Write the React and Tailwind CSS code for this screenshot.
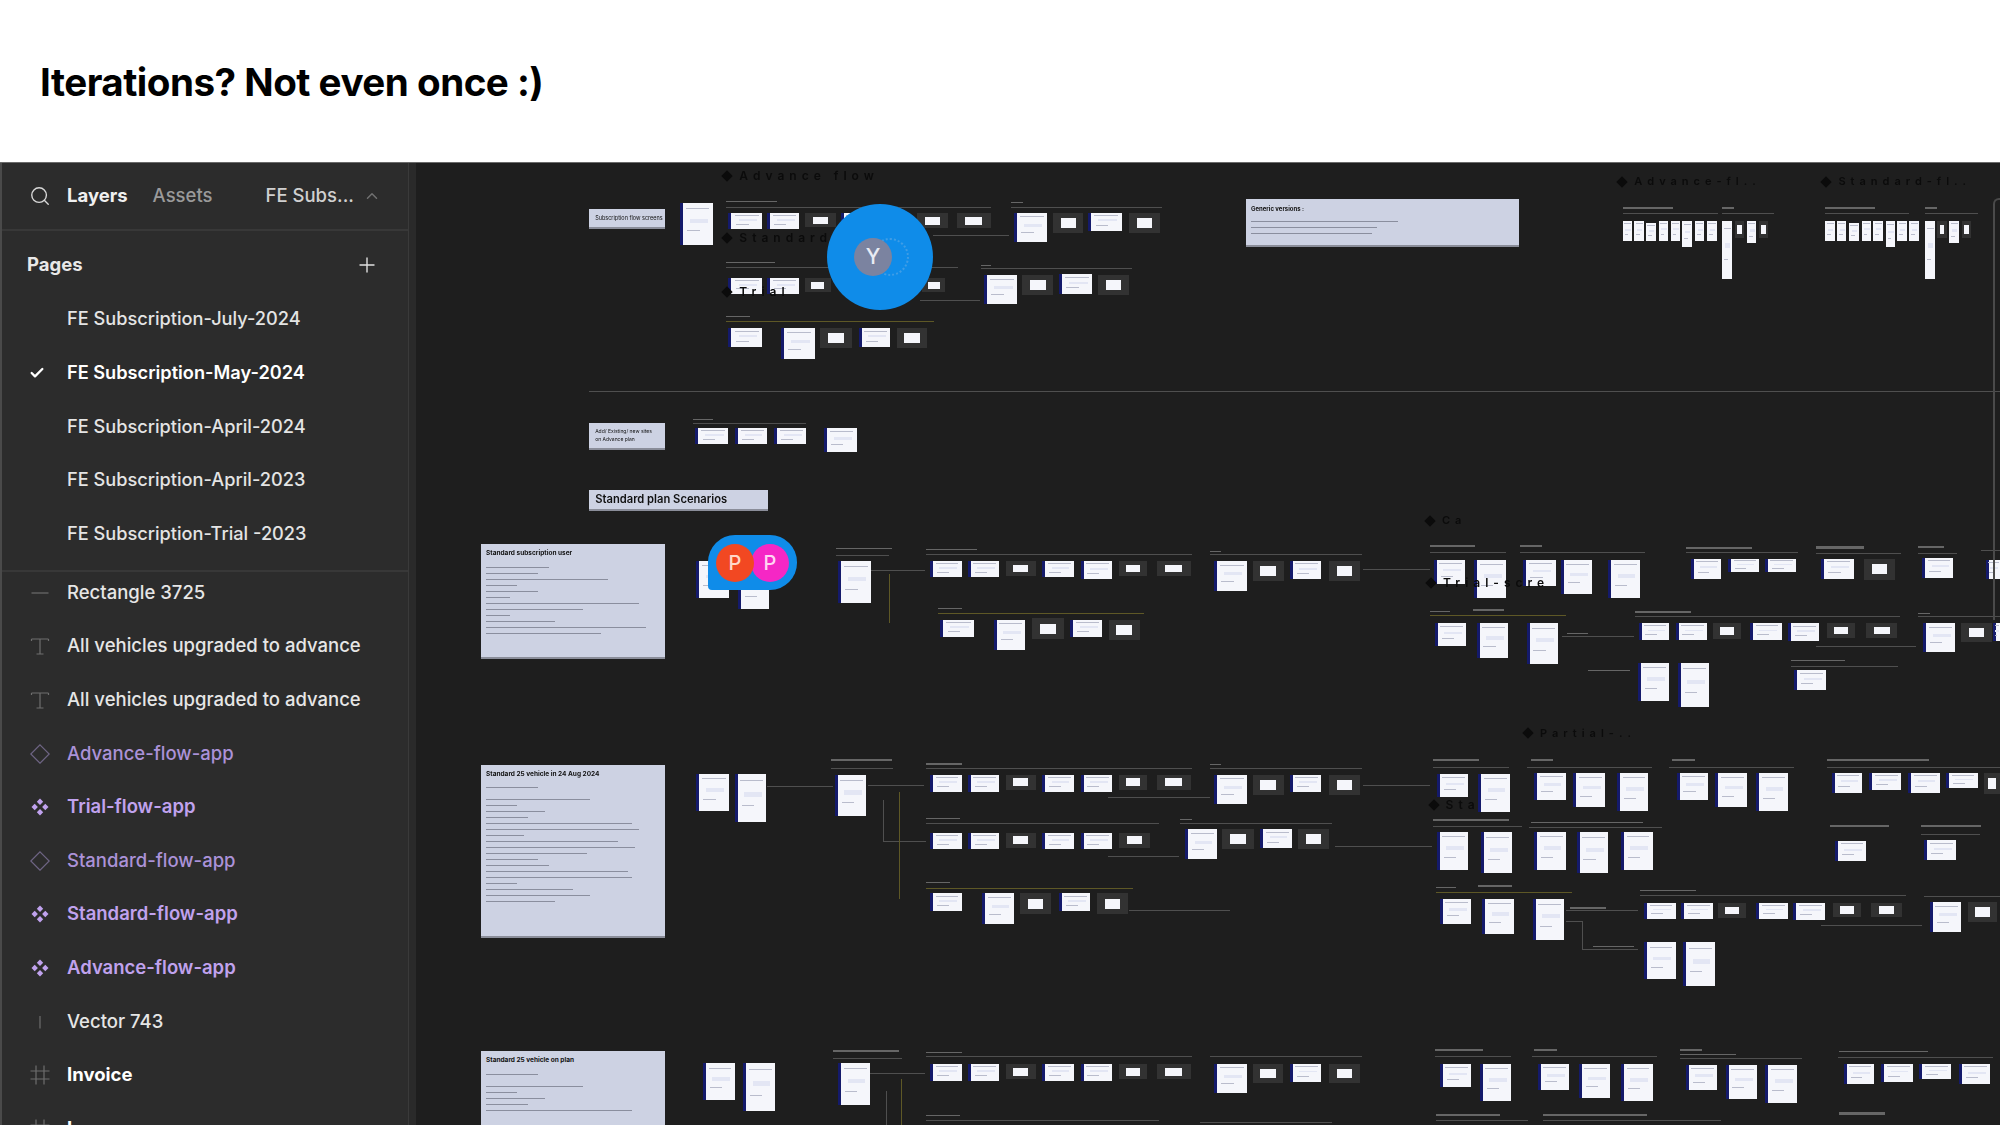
import React from 'react';
import { Search, ChevronUp, Plus, Check } from 'lucide-react';

const font = { fontFamily: 'Inter, "Noto Sans", sans-serif' };

// canvas items are measured in crops of the reference, each crop has its own scale
const region = (ox, oy, sx, sy) => ([x, y, w, h]) => ({
  left: ox + x / sx - 416,
  top: oy + y / sy - 163,
  width: w / sx,
  height: Math.max(h / sy, 1),
});

const A = region(430, 160, 1.96, 3);
const B = region(1200, 160, 1.96, 3);
const C = region(430, 520, 1.96, 2.592);
const D = region(1200, 520, 1.96, 2.592);
const E = region(1600, 170, 3, 3);

const groups = [
  {
    at: A,
    t: [[490, 128, 64, 126], [585, 160, 66, 48], [660, 160, 64, 48], [805, 160, 60, 48], [1145, 158, 64, 88], [1290, 158, 66, 54], [585, 355, 66, 46], [660, 355, 64, 46], [1085, 345, 66, 88], [1232, 343, 66, 58], [585, 505, 66, 56], [688, 505, 66, 92], [840, 505, 62, 56], [520, 805, 65, 48], [598, 805, 62, 48], [675, 805, 62, 48], [772, 805, 64, 72]],
    d: [[735, 160, 60, 42], [955, 160, 60, 45], [1033, 160, 66, 45], [1222, 158, 58, 60], [1370, 158, 60, 60], [735, 355, 50, 42], [965, 355, 45, 42], [1160, 345, 62, 60], [1310, 345, 60, 60], [765, 505, 62, 58], [915, 505, 60, 58]],
    l: [[580, 140, 520, 2], [1138, 140, 296, 2], [985, 226, 150, 2], [580, 322, 455, 2], [1080, 325, 296, 2], [960, 421, 118, 2], [312, 692, 4000, 2], [515, 788, 222, 2]],
    o: [[580, 484, 408, 2]],
    c: [[580, 122, 100, 4], [1138, 126, 24, 4], [580, 305, 96, 4], [1080, 315, 20, 4], [580, 468, 48, 4], [515, 776, 40, 4]],
  },
  {
    at: C,
    t: [[522, 105, 64, 97], [603, 130, 62, 100], [800, 105, 64, 110], [980, 107, 62, 42], [1054, 107, 62, 42], [1200, 107, 62, 42], [1275, 107, 62, 46], [1000, 258, 66, 46], [1105, 258, 62, 78], [1255, 258, 62, 46], [522, 658, 64, 97], [597, 658, 62, 124], [793, 660, 62, 108], [980, 660, 62, 44], [1054, 660, 62, 44], [1200, 660, 62, 44], [1275, 660, 62, 44], [980, 810, 62, 44], [1054, 810, 62, 44], [1200, 810, 62, 44], [1275, 810, 62, 44], [980, 968, 62, 46], [1082, 968, 62, 80], [1232, 968, 62, 46], [1480, 802, 62, 78], [535, 1408, 62, 95], [614, 1408, 62, 124], [800, 1408, 62, 108], [980, 1410, 62, 44], [1054, 1410, 62, 44], [1200, 1410, 62, 44], [1275, 1410, 62, 44]],
    d: [[1128, 107, 60, 38], [1350, 107, 56, 38], [1425, 107, 66, 38], [1180, 255, 62, 54], [1330, 258, 62, 54], [1128, 660, 60, 40], [1350, 660, 56, 40], [1425, 660, 66, 40], [1128, 810, 60, 40], [1350, 810, 62, 40], [1157, 968, 60, 54], [1308, 968, 60, 54], [1128, 1410, 60, 40], [1350, 1410, 56, 40], [1425, 1410, 66, 40]],
    l: [[795, 90, 105, 1], [865, 130, 105, 1], [972, 88, 522, 1], [660, 690, 130, 1], [785, 643, 122, 1], [858, 686, 110, 1], [887, 725, 1, 108], [887, 832, 85, 1], [972, 643, 522, 1], [972, 785, 456, 1], [1328, 718, 200, 1], [1328, 870, 140, 1], [1370, 1012, 198, 1], [790, 1394, 135, 1], [862, 1434, 108, 1], [893, 1480, 1, 88], [972, 1390, 522, 1], [972, 1555, 456, 1], [1470, 785, 98, 1]],
    o: [[899, 140, 2, 126], [995, 240, 405, 1], [920, 705, 2, 278], [972, 953, 406, 1], [923, 1448, 2, 120]],
    c: [[795, 72, 110, 4], [972, 75, 100, 4], [995, 228, 48, 3], [785, 620, 120, 4], [972, 630, 70, 4], [972, 772, 66, 3], [972, 939, 48, 3], [1470, 775, 24, 3], [790, 1374, 130, 4], [972, 1378, 70, 4], [972, 1542, 66, 3]],
  },
  {
    at: D,
    t: [[28, 107, 64, 76], [176, 107, 62, 46], [458, 103, 62, 62], [538, 103, 62, 98], [633, 103, 64, 68], [707, 103, 62, 88], [800, 103, 62, 98], [962, 100, 60, 52], [1035, 100, 60, 36], [1107, 100, 62, 36], [1217, 100, 64, 52], [1416, 98, 60, 52], [1540, 103, 28, 50], [460, 267, 62, 60], [542, 267, 62, 90], [640, 267, 62, 105], [860, 268, 60, 42], [932, 268, 62, 42], [1078, 268, 62, 42], [1152, 268, 62, 46], [1418, 267, 62, 76], [1555, 267, 13, 46], [858, 370, 62, 98], [936, 370, 62, 116], [1165, 390, 62, 50], [28, 660, 64, 76], [176, 660, 62, 46], [464, 658, 62, 60], [545, 658, 62, 98], [655, 655, 62, 70], [732, 655, 62, 90], [817, 655, 62, 100], [934, 655, 62, 70], [1010, 655, 62, 90], [1090, 655, 62, 100], [1238, 655, 60, 52], [1312, 655, 62, 46], [1388, 655, 62, 52], [1462, 655, 62, 40], [118, 802, 62, 48], [464, 808, 62, 98], [550, 808, 62, 108], [655, 808, 62, 98], [738, 808, 62, 108], [825, 808, 62, 98], [1245, 832, 60, 52], [1420, 830, 62, 52], [470, 982, 62, 64], [553, 982, 62, 92], [652, 982, 62, 106], [870, 992, 62, 42], [943, 992, 62, 42], [1090, 992, 62, 42], [1163, 992, 62, 46], [1430, 990, 62, 78], [870, 1095, 62, 96], [947, 1095, 62, 114], [28, 1410, 64, 74], [176, 1410, 62, 46], [470, 1410, 62, 60], [548, 1410, 62, 96], [662, 1410, 62, 68], [742, 1410, 62, 88], [825, 1410, 62, 96], [952, 1412, 62, 66], [1030, 1412, 62, 88], [1108, 1412, 62, 100], [1262, 1410, 60, 52], [1335, 1410, 62, 46], [1410, 1410, 62, 40], [1487, 1410, 62, 52]],
    d: [[103, 107, 62, 50], [253, 107, 60, 50], [1302, 100, 60, 55], [1005, 268, 56, 40], [1228, 268, 56, 38], [1305, 268, 62, 38], [1492, 267, 60, 50], [103, 660, 62, 52], [253, 660, 60, 52], [1537, 655, 31, 55], [44, 802, 62, 52], [193, 802, 60, 52], [1015, 992, 56, 40], [1240, 992, 56, 38], [1315, 992, 60, 38], [1505, 990, 58, 52], [103, 1410, 60, 50], [253, 1410, 60, 50]],
    l: [[20, 88, 298, 2], [320, 127, 130, 1], [450, 84, 150, 2], [627, 84, 245, 2], [952, 84, 220, 2], [1207, 86, 166, 2], [1408, 86, 76, 2], [1530, 78, 38, 2], [710, 300, 140, 1], [852, 248, 520, 1], [1207, 326, 196, 1], [1408, 248, 160, 1], [1158, 378, 210, 1], [20, 643, 298, 2], [320, 686, 130, 1], [456, 640, 150, 1], [640, 640, 245, 1], [920, 640, 245, 1], [1228, 640, 340, 1], [0, 785, 258, 2], [265, 845, 190, 1], [456, 792, 175, 1], [645, 797, 260, 1], [1413, 815, 115, 1], [718, 1010, 140, 1], [718, 1040, 30, 1], [748, 1040, 2, 74], [748, 1113, 110, 1], [862, 972, 522, 1], [1218, 1050, 198, 1], [1420, 975, 148, 1], [20, 1390, 298, 2], [460, 1390, 150, 1], [650, 1390, 245, 1], [940, 1395, 240, 1], [1250, 1393, 305, 1], [462, 1555, 180, 1], [672, 1555, 350, 1], [0, 1560, 258, 1]],
    o: [[450, 247, 267, 2], [462, 965, 268, 2]],
    c: [[20, 80, 22, 3], [450, 66, 90, 4], [627, 66, 44, 4], [952, 70, 130, 4], [1207, 68, 95, 6], [1408, 68, 50, 4], [450, 236, 40, 3], [535, 230, 60, 5], [720, 292, 40, 3], [852, 236, 110, 4], [1408, 240, 22, 3], [760, 388, 82, 3], [1158, 362, 106, 4], [20, 633, 22, 3], [456, 620, 90, 4], [648, 620, 44, 4], [925, 620, 46, 4], [1228, 620, 200, 4], [456, 776, 150, 4], [648, 782, 220, 4], [1235, 790, 115, 6], [1413, 790, 118, 6], [462, 950, 40, 3], [545, 945, 66, 5], [725, 1004, 70, 5], [862, 958, 110, 4], [770, 1103, 80, 3], [460, 1372, 95, 4], [655, 1372, 44, 4], [940, 1372, 44, 4], [940, 1385, 110, 3], [1252, 1376, 175, 4], [462, 1540, 126, 4], [672, 1540, 205, 4], [1252, 1535, 90, 6]],
  },
  {
    at: E,
    s: [[68, 152, 28, 62], [103, 152, 28, 62], [137, 160, 30, 52], [176, 152, 28, 60], [212, 152, 28, 60], [247, 152, 28, 80], [285, 152, 28, 62], [320, 152, 30, 62], [367, 152, 28, 174], [441, 152, 28, 68], [676, 152, 28, 62], [711, 152, 28, 62], [746, 160, 30, 52], [785, 152, 28, 60], [820, 152, 28, 60], [857, 152, 28, 80], [892, 152, 28, 62], [928, 152, 28, 62], [976, 152, 28, 174], [1048, 152, 28, 68]],
    d: [[405, 152, 28, 52], [477, 152, 28, 52], [1012, 152, 28, 52], [1086, 152, 28, 52]],
    l: [[68, 128, 285, 2], [367, 128, 155, 2], [676, 128, 250, 2], [976, 128, 158, 2]],
    o: [],
    c: [[68, 112, 150, 4], [367, 112, 36, 4], [676, 112, 150, 4], [976, 112, 36, 4]],
  },
];

const headings = [
  { at: A, pos: [575, 20], text: 'Advance flow', size: 12 },
  { at: A, pos: [575, 206], text: 'Standard', size: 12 },
  { at: A, pos: [575, 368], text: 'Trial', size: 12 },
  { at: B, pos: [820, 40], text: 'Advance-fl..', size: 11 },
  { at: B, pos: [1220, 40], text: 'Standard-fl..', size: 11 },
  { at: B, pos: [443, 1057], text: 'Ca', size: 11 },
  { at: D, pos: [445, 141], text: 'Trial-scre', size: 12 },
  { at: D, pos: [635, 531], text: 'Partial-..', size: 11 },
  { at: D, pos: [450, 716], text: 'Sta', size: 12 },
];

const notes = [
  { box: A([312, 146, 148, 60]), title: 'Subscription flow screens', titleClass: 'text-[5.500px] whitespace-nowrap', bars: [], center: true },
  { box: A([312, 788, 148, 82]), title: 'Add/ Existing/ new sites on Advance plan', titleClass: 'text-[5px] leading-[8px]', bars: [], center: true },
  { box: A([312, 990, 350, 62]), title: 'Standard plan Scenarios', titleClass: 'text-[11.200px] font-semibold', bars: [], center: true },
  { box: B([90, 118, 536, 142]), title: 'Generic versions :', titleClass: 'text-[6px] font-bold', bars: [56, 48, 46] },
  { box: C([100, 63, 360, 298]), title: 'Standard subscription user', titleClass: 'text-[6.500px] font-bold', bars: [36, 30, 70, 18, 30, 14, 88, 56, 14, 40, 92, 66] },
  { box: C([100, 634, 360, 450]), title: 'Standard 25 vehicle in 24 Aug 2024', titleClass: 'text-[6.500px] font-bold', bars: [30, 0, 60, 18, 34, 24, 84, 88, 22, 76, 86, 58, 30, 36, 82, 84, 18, 50, 60, 40] },
  { box: C([100, 1377, 360, 300]), title: 'Standard 25 vehicle on plan', titleClass: 'text-[6.500px] font-bold', bars: [30, 0, 56, 18, 34, 24, 84] },
];

const pages = [
  { name: 'FE Subscription-July-2024' },
  { name: 'FE Subscription-May-2024', active: true },
  { name: 'FE Subscription-April-2024' },
  { name: 'FE Subscription-April-2023' },
  { name: 'FE Subscription-Trial -2023' },
];

const layers = [
  { name: 'Rectangle 3725', icon: 'dash', cls: 'font-medium text-[#e6e6e6]' },
  { name: 'All vehicles upgraded to advance', icon: 'text', cls: 'font-medium text-[#e6e6e6]' },
  { name: 'All vehicles upgraded to advance', icon: 'text', cls: 'font-medium text-[#e6e6e6]' },
  { name: 'Advance-flow-app', icon: 'instance', cls: 'font-medium text-[#ab92d8]' },
  { name: 'Trial-flow-app', icon: 'component', cls: 'font-semibold text-[#c0a2ee]' },
  { name: 'Standard-flow-app', icon: 'instance', cls: 'font-medium text-[#ab92d8]' },
  { name: 'Standard-flow-app', icon: 'component', cls: 'font-semibold text-[#c0a2ee]' },
  { name: 'Advance-flow-app', icon: 'component', cls: 'font-semibold text-[#c0a2ee]' },
  { name: 'Vector 743', icon: 'bar', cls: 'font-medium text-[#e6e6e6]' },
  { name: 'Invoice', icon: 'frame', cls: 'font-bold text-white' },
  { name: 'L', icon: 'frame', cls: 'font-bold text-white' },
];

const LayerIcon = ({ type }) => {
  if (type === 'component') {
    return (
      <svg viewBox="0 0 20 20" className="w-[20px] h-[20px] text-[#c0a2ee]" fill="currentColor">
        <path d="M10 1.500l3.200 3.200L10 7.900 6.800 4.700z" />
        <path d="M10 12.100l3.200 3.200L10 18.500l-3.200-3.200z" />
        <path d="M4.700 6.800L7.900 10l-3.200 3.200L1.500 10z" />
        <path d="M15.300 6.800L18.500 10l-3.200 3.200L12.100 10z" />
      </svg>
    );
  }
  const paths = {
    dash: 'M1.500 10h17',
    text: 'M1.500 3h17M10 3v15M6.500 18h7M1.500 3v2M18.500 3v2',
    instance: 'M10 .800L19.200 10 10 19.200 .800 10z',
    bar: 'M10 4v12.500',
    frame: 'M6 .500v19M14 .500v19M.500 6h19M.500 14h19',
  };
  return (
    <svg viewBox="0 0 20 20" className={`w-[20px] h-[20px] ${type === 'instance' ? 'text-[#6f6585]' : 'text-[#6e6e6e]'}`} fill="none" stroke="currentColor" strokeWidth="1.200">
      <path d={paths[type]} />
    </svg>
  );
};

const Sidebar = () => (
  <aside className="w-[408px] shrink-0 bg-[#2c2c2c] border-l-2 border-[#4a4a4a] flex flex-col overflow-hidden">
    {/* Tabs */}
    <div className="h-[68px] shrink-0 flex items-center border-b-2 border-[#383838] text-[18.500px] pl-[27px]">
      <Search className="w-[22px] h-[22px] text-[#d8d8d8]" strokeWidth={1.500} />
      <span className="ml-[16px] font-bold text-[#f0f0f0]">Layers</span>
      <span className="ml-[25px] font-medium text-[#9a9a9a]">Assets</span>
      <span className="ml-[53px] font-medium text-[#d0d0d0]">FE Subs...</span>
      <ChevronUp className="ml-[9px] w-[18px] h-[18px] text-[#707070]" strokeWidth={2} />
    </div>
    {/* Pages */}
    <div className="shrink-0 border-b-2 border-[#383838] pb-[21px]">
      <div className="h-[60px] pt-[8px] flex items-center justify-between pl-[25px] pr-[29px]">
        <span className="text-[18.500px] font-bold text-[#e8e8e8]">Pages</span>
        <Plus className="w-[24px] h-[24px] text-[#e0e0e0]" strokeWidth={1.400} />
      </div>
      <ul className="flex flex-col gap-[23.700px] mt-[13px]">
        {pages.map((p) => (
          <li key={p.name} className="h-[30px] flex items-center">
            <span className="w-[65px] flex justify-end pr-[22px]">
              {p.active && <Check className="w-[16px] h-[16px] text-white" strokeWidth={3.500} />}
            </span>
            <span className={`text-[18.200px] ${p.active ? 'font-semibold text-white' : 'font-medium text-[#e4e4e4]'}`}>{p.name}</span>
          </li>
        ))}
      </ul>
    </div>
    {/* Layers */}
    <ul className="flex flex-col gap-[23.600px] pt-[6px]">
      {layers.map((l, i) => (
        <li key={i} className="h-[30px] shrink-0 flex items-center">
          <span className="w-[65px] flex pl-[28px]">
            <LayerIcon type={l.icon} />
          </span>
          <span className={`text-[18.500px] ${l.cls}`}>{l.name}</span>
        </li>
      ))}
    </ul>
  </aside>
);

const Thumb = ({ style, small }) => (
  <div className="absolute bg-[#f5f6fb] overflow-hidden" style={style}>
    {!small && <div className="absolute left-0 top-0 bottom-0 w-[3px] bg-[#141a6b]" />}
    <div className={`absolute top-[12%] right-[10%] h-[1px] bg-[#b9bccc] ${small ? 'left-[15%]' : 'left-[18%]'}`} />
    <div className="absolute top-[38%] left-[30%] right-[14%] h-[10%] bg-[#e3e6f4]" />
    <div className="absolute top-[66%] left-[22%] right-[40%] h-[1px] bg-[#b9bccc]" />
  </div>
);

const DarkThumb = ({ style }) => (
  <div className="absolute bg-[#323232] flex items-center justify-center" style={style}>
    <div className="w-[50%] h-[50%] bg-[#f5f6fb]" />
  </div>
);

const Note = ({ note }) => (
  <div
    className={`absolute bg-[#cdd2e3] border-b-2 border-[#8a8d99] text-[#111] flex flex-col overflow-hidden ${note.center ? 'justify-center px-[6px]' : 'px-[5px] pt-[5px] gap-[4.500px]'}`}
    style={note.box}
  >
    <div className={note.titleClass}>{note.title}</div>
    {note.bars.map((w, i) => (
      <div key={i} className="h-[1.500px] shrink-0 bg-[#6d7080] opacity-70" style={{ width: `${w}%`, marginTop: i === 0 ? 3 : 0 }} />
    ))}
  </div>
);

const Canvas = () => (
  <div className="flex-1 relative overflow-hidden bg-[#1e1e1e]">
    <div className="absolute inset-0 blur-[0.500px]">
      {groups.map((g, gi) => (
        <React.Fragment key={gi}>
          {g.l.map((r, i) => <div key={`l${i}`} className="absolute bg-[#4f4f4f]" style={g.at(r)} />)}
          {g.o.map((r, i) => <div key={`o${i}`} className="absolute bg-[#5e5826]" style={g.at(r)} />)}
          {g.c.map((r, i) => <div key={`c${i}`} className="absolute bg-[#666666]" style={g.at(r)} />)}
          {(g.t || []).map((r, i) => <Thumb key={`t${i}`} style={g.at(r)} />)}
          {(g.s || []).map((r, i) => <Thumb key={`s${i}`} small style={g.at(r)} />)}
          {g.d.map((r, i) => <DarkThumb key={`d${i}`} style={g.at(r)} />)}
        </React.Fragment>
      ))}
      {notes.map((n, i) => <Note key={i} note={n} />)}
      {headings.map((h, i) => {
        const p = h.at([h.pos[0], h.pos[1], 0, 0]);
        return (
          <div key={i} className="absolute text-[#0b0b0b] font-semibold tracking-[5px] whitespace-nowrap flex items-center gap-[8px]" style={{ left: p.left, top: p.top, fontSize: h.size }}>
            <span className="w-[8px] h-[8px] rotate-45 bg-[#0b0b0b]" />
            {h.text}
          </div>
        );
      })}
      {/* frame edge at the far right */}
      <div className="absolute left-[1577px] top-[35px] w-[20px] h-[422px] border-l-2 border-t-2 border-[#4a4a4a] rounded-tl-[6px]" />
    </div>

    {/* multiplayer cursors */}
    <div className="absolute left-[411px] top-[41px] w-[106px] h-[106px] rounded-full bg-[#0f8ce9] flex items-center justify-center">
      <div className="absolute left-[44px] top-[34px] w-[38px] h-[38px] rounded-full border-2 border-dotted border-[#3f9de6]" />
      <div className="relative -ml-[14px] w-[38px] h-[38px] rounded-full bg-[#7b83a0] flex items-center justify-center text-[#e8ebf4] text-[21px] font-medium">Y</div>
    </div>
    <div className="absolute left-[292px] top-[372px] w-[89px] h-[55px] rounded-[27px] rounded-bl-[4px] bg-[#0f8ce9] flex items-center pl-[8px]">
      <div className="relative z-10 w-[38px] h-[38px] rounded-full bg-[#f24822] flex items-center justify-center text-[#ffd9c9] text-[20px] font-medium">P</div>
      <div className="-ml-[3px] w-[38px] h-[38px] rounded-full bg-[#f527c5] flex items-center justify-center text-[#ffd6f2] text-[20px] font-medium">P</div>
    </div>
  </div>
);

const App = () => (
  <div className="w-[2000px] h-[1125px] bg-white flex flex-col overflow-hidden" style={font}>
    <header className="h-[163px] shrink-0 flex items-center pl-[40px] pt-[4px] border-b border-[#6a6a6a]">
      <h1 className="text-[38.600px] font-bold text-black tracking-[-0.5px]">Iterations? Not even once :)</h1>
    </header>
    <div className="flex-1 flex min-h-0">
      <Sidebar />
      <div className="w-[8px] shrink-0 bg-[#2a2a2a] border-l border-[#3a3a3a]" />
      <Canvas />
    </div>
  </div>
);

export default App;
